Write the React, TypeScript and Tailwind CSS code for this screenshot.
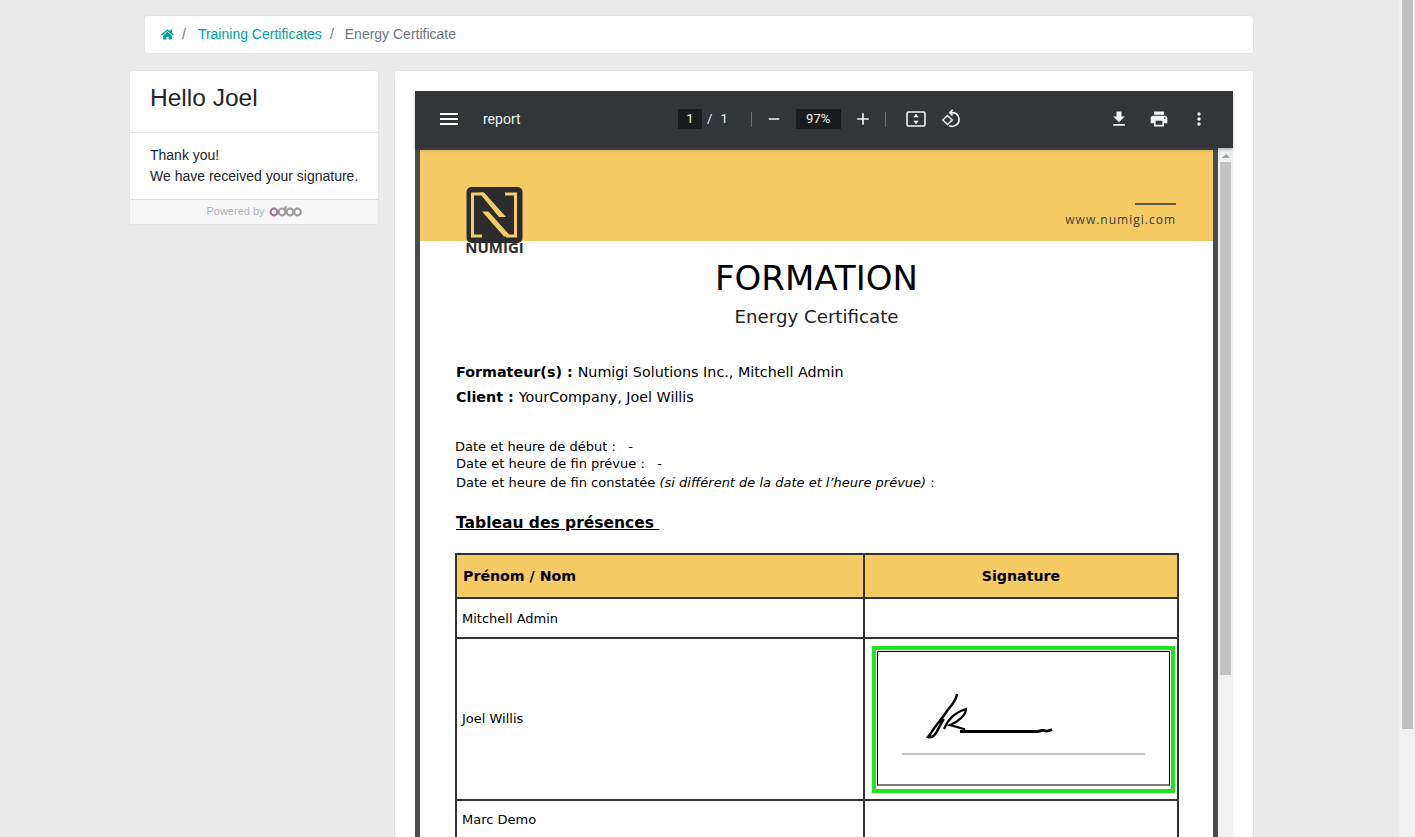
import React from "react";
import { FaHome } from "react-icons/fa";
import {
  MdAdd,
  MdFileDownload,
  MdMenu,
  MdMoreVert,
  MdPrint,
  MdRemove,
} from "react-icons/md";

const OdooLogo = () => (
  <svg width="33" height="12" viewBox="0 0 33 12" fill="none" className="ml-1">
    <circle cx="5" cy="7" r="3.4" stroke="#b45f9f" strokeWidth="2" />
    <circle cx="13" cy="7" r="3.4" stroke="#9a9a9a" strokeWidth="2" />
    <path d="M16.4 1v6" stroke="#9a9a9a" strokeWidth="2" />
    <circle cx="21" cy="7" r="3.4" stroke="#9a9a9a" strokeWidth="2" />
    <circle cx="28.5" cy="7" r="3.4" stroke="#9a9a9a" strokeWidth="2" />
  </svg>
);

const FitIcon = () => (
  <svg width="20" height="16" viewBox="0 0 20 16" fill="none">
    <rect x="1" y="1" width="18" height="14" rx="1.5" stroke="#f1f3f4" strokeWidth="1.6" />
    <path d="M10 2.8 12.6 6.2H7.4ZM10 13.2 7.4 9.8h5.2Z" fill="#f1f3f4" />
  </svg>
);

const RotateIcon = () => (
  <svg width="20" height="20" viewBox="0 0 20 20" fill="none" stroke="#f1f3f4" strokeWidth="1.6">
    <path d="M6.5 6.5 1.8 11l4.7 4.5 4.7-4.5Z" />
    <path d="M9 3.6h2a6.8 6.8 0 0 1 3.4 12.8 6.6 6.6 0 0 1-6.4.2" />
    <path d="M11.6.8 8.8 3.6l2.8 2.8" />
  </svg>
);

const NumigiLogo = () => (
  <div className="absolute left-[46px] top-[37px] flex w-[57px] flex-col items-center">
    <svg width="57" height="56" viewBox="0 0 57 56" fill="none">
      <rect x="0.5" y="0" width="56" height="56" rx="5" fill="#2c2c2c" />
      <path d="M17 7H6.5V49H16M39 7H49.5V49H40" stroke="#f6cb66" strokeWidth="3" />
      <path d="M13 5.5h5L40 30H33ZM16 24.5h6.5L45 49.5H38Z" fill="#f6cb66" />
    </svg>
    <span className="mt-[-3px] font-['Open_Sans'] text-[15px] leading-[14px] font-bold text-[#2c2c2c]">
      NUMIGI
    </span>
  </div>
);

const Signature = () => (
  <svg width="292" height="131" viewBox="0 0 292 131" fill="none" className="block">
    <path
      d="M79 42c-1 8-6 11-10 17-5 8-12 15-16 22-2 3-3 4-3 4 3 1 6-1 8-4 3-5 5-10 8-14"
      stroke="#000"
      strokeWidth="2.4"
    />
    <path
      d="M66 77C70 67 78 60 88 57 88 63 80 70 72 73L86 77V79"
      stroke="#000"
      strokeWidth="2.2"
    />
    <path d="M82 79.5H159c4 0 5-2 7-1 2 1 4 1 8-1" stroke="#000" strokeWidth="2.8" />
    <path d="M24 102h243" stroke="#c2c2c2" strokeWidth="2" />
  </svg>
);

const PdfToolbar = () => (
  <div className="relative z-10 flex h-[57px] items-center bg-[#323639] pb-[1px] font-['Roboto'] text-[#f1f3f4] shadow-[0_2px_3px_rgba(0,0,0,0.25)]">
    <MdMenu size={24} className="ml-[22px] text-white" />
    <span className="ml-[22px] w-[195px] text-[14px]">report</span>
    <span className="flex h-5 w-6 items-center justify-center bg-[#191b1c] text-[13px]">1</span>
    <span className="ml-[5px] text-[13px]">/</span>
    <span className="ml-[8px] text-[13px]">1</span>
    <span className="ml-[23px] h-[15px] w-px bg-[#6a6e71]" />
    <MdRemove size={18} className="ml-[13px]" />
    <span className="ml-[13px] flex h-5 w-[45px] items-center justify-center bg-[#191b1c] text-[13px]">
      97%
    </span>
    <MdAdd size={20} className="ml-[12px]" />
    <span className="ml-[12px] h-[15px] w-px bg-[#6a6e71]" />
    <span className="ml-[20px] flex">
      <FitIcon />
    </span>
    <span className="ml-[15px] flex">
      <RotateIcon />
    </span>
    <span className="ml-auto flex items-center">
      <MdFileDownload size={20} />
      <MdPrint size={20} className="ml-[20px]" />
      <MdMoreVert size={20} className="ml-[20px] mr-[24px]" />
    </span>
  </div>
);

const PdfPage = () => (
  <div className="flex-1 bg-white font-['DejaVu_Sans'] text-black">
    <div className="relative flex h-[91px] flex-col items-end bg-[#f6cb66] pr-[37px] pt-[53px]">
      <NumigiLogo />
      <span className="h-[2px] w-[41px] bg-[#5f5a45]" />
      <span className="mt-[6px] font-['Open_Sans'] text-[12px] leading-[17px] tracking-[1px] text-[#3a3a36]">
        www.numigi.com
      </span>
    </div>
    <div className="mt-[16px] text-center text-[34px] leading-[42px]">FORMATION</div>
    <div className="mt-[6px] text-center text-[18.2px] leading-[24px] text-[#222]">
      Energy Certificate
    </div>
    <div className="ml-[36px] mt-[31px] text-[14.3px] leading-[25px]">
      <div>
        <b>Formateur(s) : </b>Numigi Solutions Inc., Mitchell Admin
      </div>
      <div>
        <b>Client : </b>YourCompany, Joel Willis
      </div>
    </div>
    <div className="ml-[36px] mt-[28px] text-[13px] leading-[18px]">
      <div className="ml-[-1px]">Date et heure de début :&nbsp;&nbsp; -</div>
      <div className="mt-[-1px]">Date et heure de fin prévue :&nbsp;&nbsp; -</div>
      <div className="mt-[1px]">
        Date et heure de fin constatée <i>(si différent de la date et l’heure prévue)</i> :
      </div>
    </div>
    <div className="ml-[36px] mt-[21px] text-[15.5px] font-bold leading-[20px] underline">
      Tableau des présences&nbsp;
    </div>
    <table className="ml-[35px] mt-[20px] w-[724px] table-fixed border-collapse text-[13px]">
      <tbody>
        <tr className="h-[44px] bg-[#f6cb66] text-[14.2px] font-bold">
          <td className="w-[408px] border-2 border-[#333] pl-[6px] pt-[2px]">Prénom / Nom</td>
          <td className="border-2 border-[#333] pt-[2px] text-center">Signature</td>
        </tr>
        <tr className="h-[40px]">
          <td className="border-2 border-[#333] pl-[5px] pt-[2px]">Mitchell Admin</td>
          <td className="border-2 border-[#333]" />
        </tr>
        <tr className="h-[162px]">
          <td className="border-2 border-[#333] pl-[5px]">Joel Willis</td>
          <td className="border-2 border-[#333] pl-[7px]">
            <div className="h-[147px] w-[303px] border-4 border-[#1ee61e] p-[1px]">
              <div className="h-[135px] w-[293px] border border-b-2 border-black border-b-[#777]">
                <Signature />
              </div>
            </div>
          </td>
        </tr>
        <tr className="h-[40px]">
          <td className="border-2 border-[#333] pl-[5px]">Marc Demo</td>
          <td className="border-2 border-[#333]" />
        </tr>
      </tbody>
    </table>
    <div className="h-[40px]" />
  </div>
);

const PdfViewer = () => (
  <div className="flex flex-col">
    <PdfToolbar />
    <div className="flex pt-[2px] bg-[#484c4f]">
      <div className="w-[5px] bg-[#484c4f]" />
      <PdfPage />
      <div className="w-[5px] bg-[#484c4f]" />
      <div className="mt-[-2px] flex w-[15px] flex-col items-center bg-[#f1f1f1]">
        <span className="mt-[6px] h-0 w-0 border-x-[4px] border-b-[4px] border-x-transparent border-b-[#a3a3a3]" />
        <span className="mt-[4px] h-[513px] w-[11px] bg-[#c1c1c1]" />
      </div>
    </div>
  </div>
);

const App = () => {
  return (
    <div className="flex h-[837px] overflow-hidden bg-[#ebebeb] font-['Liberation_Sans',sans-serif] text-[14px] text-[#212529]">
      <main className="flex-1 pl-[129px]">
        <nav className="ml-[15px] mt-[15px] flex h-[39px] w-[1110px] items-center rounded-[4px] border border-black/10 bg-white pl-[16px] text-[14px]">
          <FaHome size={13} className="text-[#00a09d]" />
          <span className="ml-[8px] text-[#6c757d]">/</span>
          <span className="ml-[12px] text-[#00a09d]">Training Certificates</span>
          <span className="ml-[8px] text-[#6c757d]">/</span>
          <span className="ml-[11px] text-[#6c757d]">Energy Certificate</span>
        </nav>
        <div className="mt-[16px] flex items-start gap-[15px]">
          <aside className="w-[250px] rounded-[4px] border border-black/10 bg-white">
            <div className="h-[62px] border-b border-black/10 pl-[20px] pt-[12px] text-[24.5px] leading-[29px]">
              Hello Joel
            </div>
            <div className="h-[66px] pl-[20px] pt-[12px] leading-[21px]">
              Thank you!
              <br />
              We have received your signature.
            </div>
            <div className="flex h-[25px] items-center justify-center rounded-b-[4px] border-t border-black/10 bg-[#f7f7f7] pb-[2px] text-[11px] text-[#adb5bd]">
              Powered by
              <OdooLogo />
            </div>
          </aside>
          <section className="h-[800px] w-[860px] overflow-hidden rounded-t-[4px] border border-black/10 bg-white px-[20px] pt-[20px]">
            <PdfViewer />
          </section>
        </div>
      </main>
      <div className="flex w-4 justify-center bg-[#f1f1f1]">
        <span className="h-[729px] w-[11px] bg-[#c1c1c1]" />
      </div>
    </div>
  );
};

export default App;
